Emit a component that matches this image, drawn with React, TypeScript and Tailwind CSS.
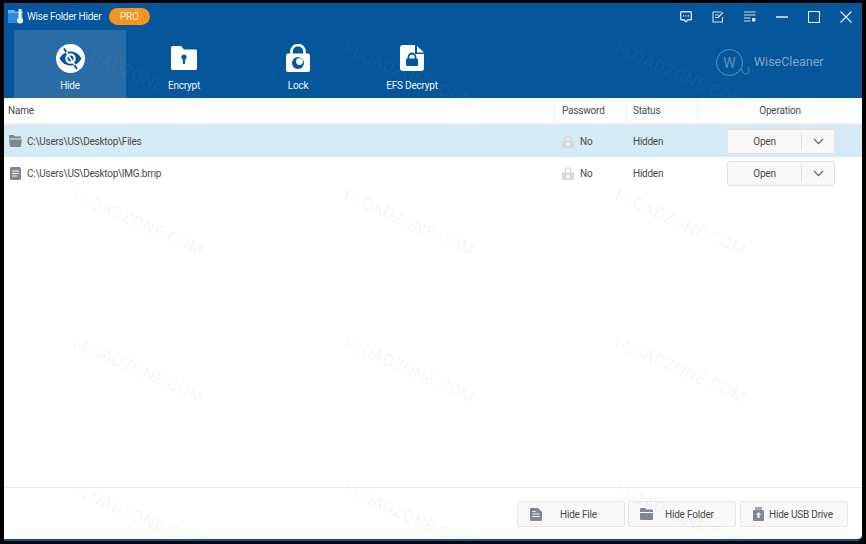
const FONT = 'Roboto, sans-serif';

function HideIcon() {
  return (
    <svg width="29" height="29" viewBox="0 0 29 29">
      <circle cx="14.5" cy="14.5" r="14.5" fill="#fff" />
      <path d="M8 4.500L21 25" stroke="#05569a" strokeWidth="2" />
      <path d="M3.500 14.500C6.500 9.500 10 7.500 14.500 7.500s8 2 11 7c-3 5-6.500 7-11 7s-8-2-11-7z" fill="#05569a" />
      <circle cx="14.500" cy="14.500" r="5.200" fill="#fff" />
      <circle cx="14.500" cy="14.500" r="3" fill="#05569a" />
      <path d="M10.200 8L18.800 21" stroke="#fff" strokeWidth="1.500" />
    </svg>
  );
}

function EncryptIcon() {
  return (
    <svg width="26" height="24" viewBox="0 0 26 24">
      <path d="M1.500 0H10l3 3.500h11.500A1.500 1.500 0 0 1 26 5v17.500a1.500 1.500 0 0 1-1.500 1.500h-23A1.500 1.500 0 0 1 0 22.500v-21A1.500 1.500 0 0 1 1.500 0z" fill="#fff" />
      <circle cx="13" cy="11" r="2.600" fill="#05569a" />
      <rect x="11.900" y="11" width="2.200" height="7" fill="#05569a" />
    </svg>
  );
}

function LockIcon() {
  return (
    <svg width="24" height="28" viewBox="0 0 24 28">
      <path d="M5.500 11V7.500a6.500 6.500 0 0 1 13 0V11" fill="none" stroke="#fff" strokeWidth="2.600" />
      <rect x="0" y="9.500" width="24" height="18.500" rx="2" fill="#fff" />
      <circle cx="12" cy="19" r="6" fill="#05569a" />
      <circle cx="13.500" cy="17.500" r="3.400" fill="#fff" />
    </svg>
  );
}

function EfsIcon() {
  return (
    <svg width="24" height="26" viewBox="0 0 24 26">
      <path d="M3 0H15L15 9H24V23a3 3 0 0 1-3 3H3a3 3 0 0 1-3-3V3a3 3 0 0 1 3-3z" fill="#fff" />
      <path d="M17 1L24 7.500H17z" fill="#fff" />
      <rect x="6" y="13.500" width="12" height="7.500" rx="1" fill="#05569a" />
      <path d="M8.500 14v-2a3.500 3.500 0 0 1 7 0v2" fill="none" stroke="#05569a" strokeWidth="1.800" />
    </svg>
  );
}

function FolderOpenIcon() {
  return (
    <svg width="13" height="12" viewBox="0 0 13 12" fill="#7f8791">
      <path d="M0 1a1 1 0 0 1 1-1h3.500l1.200 1.300h5.300a1 1 0 0 1 1 1V3.500H0z" />
      <path d="M0 4.500h13L11.800 12H1z" />
    </svg>
  );
}

function DocIcon() {
  return (
    <svg width="11" height="13" viewBox="0 0 11 13">
      <rect width="11" height="13" rx="1.500" fill="#7f8791" />
      <path d="M2 4h7M2 6.500h7M2 9h5" stroke="#fff" strokeWidth="1" />
    </svg>
  );
}

function SmallLock() {
  return (
    <svg width="12" height="13" viewBox="0 0 12 13">
      <path d="M3 6V4a3 3 0 0 1 6 0v2" fill="none" stroke="#d9d9d9" strokeWidth="1.500" />
      <rect y="5.500" width="12" height="7.500" rx="0.500" fill="#d9d9d9" />
      <rect x="4.500" y="8" width="3" height="2.500" fill="#fff" />
    </svg>
  );
}

function Chevron() {
  return (
    <svg width="11" height="7" viewBox="0 0 11 7">
      <path d="M1 1l4.500 4.500L10 1" fill="none" stroke="#6b6b6b" strokeWidth="1.300" />
    </svg>
  );
}

function Watermark() {
  return (
    <span className="block w-[140px] origin-top-left rotate-[23.5deg] whitespace-nowrap text-[17px] leading-none tracking-[0.3px] text-[#8fa3b8]/10">
      I-LOADZONE.COM
    </span>
  );
}

const tabs = [
  { label: 'Hide', icon: <HideIcon />, active: true },
  { label: 'Encrypt', icon: <EncryptIcon />, active: false },
  { label: 'Lock', icon: <LockIcon />, active: false },
  { label: 'EFS Decrypt', icon: <EfsIcon />, active: false },
];

const rows = [
  { path: 'C:\\Users\\US\\Desktop\\Files', icon: <FolderOpenIcon />, selected: true },
  { path: 'C:\\Users\\US\\Desktop\\IMG.bmp', icon: <DocIcon />, selected: false },
];

function TitleIcons() {
  return (
    <div className="flex h-[26px] items-center">
      <button className="flex w-8 justify-center">
        <svg width="12" height="12" viewBox="0 0 12 12">
          <path d="M1.500 0.800h9a.8.800 0 0 1 .8.8v6.400a.8.800 0 0 1-.8.800H8L6 10.800 4 8.800H1.500a.8.800 0 0 1-.8-.8V1.600a.8.800 0 0 1 .8-.8z" fill="none" stroke="#cfe0ee" strokeWidth="1.400" />
          <path d="M3 4.800h1.200M5.400 4.800h1.200M7.800 4.800h1.200" stroke="#fff" strokeWidth="1.200" />
        </svg>
      </button>
      <button className="flex w-8 justify-center">
        <svg width="12" height="12" viewBox="0 0 12 12">
          <path d="M9.500 1H1v10h9.500V6" fill="none" stroke="#cfe0ee" strokeWidth="1.100" />
          <path d="M3 4h4M3 6.500h3.500M6 6.500L11 1.500" stroke="#cfe0ee" strokeWidth="1.100" />
        </svg>
      </button>
      <button className="flex w-8 justify-center">
        <svg width="12" height="12" viewBox="0 0 12 12">
          <path d="M0 1h11.500M0 4h11.500M0 7h6.500M0 10h6.500" stroke="#cfe0ee" strokeWidth="1.100" />
          <path d="M8 7h3.500v3.500H8z" fill="#cfe0ee" />
        </svg>
      </button>
      <button className="flex w-8 justify-center">
        <svg width="12" height="12" viewBox="0 0 12 12">
          <path d="M0 6h12" stroke="#e6eff6" strokeWidth="1.400" />
        </svg>
      </button>
      <button className="flex w-8 justify-center">
        <svg width="12" height="12" viewBox="0 0 12 12">
          <rect x="0.500" y="0.500" width="11" height="11" fill="none" stroke="#e6eff6" strokeWidth="1.100" />
        </svg>
      </button>
      <button className="flex w-8 justify-center">
        <svg width="12" height="12" viewBox="0 0 12 12">
          <path d="M0.500 0.500l11 11M11.500 0.500l-11 11" stroke="#e6eff6" strokeWidth="1.100" />
        </svg>
      </button>
    </div>
  );
}

function BottomButton({ label, icon, textClass }: { label: string; icon: React.ReactNode; textClass: string }) {
  return (
    <button className="flex h-[26px] w-[108px] items-center rounded-[2px] border border-[#e6e6e6] bg-[#f8f8f8] text-[10px] tracking-[-0.2px] text-[#4a4a4a] last:ml-px">
      <span className="ml-[11px] flex w-[13px] shrink-0 justify-center">{icon}</span>
      <span className={textClass}>{label}</span>
    </button>
  );
}

export default function App() {
  return (
    <div className="relative h-[544px] w-[866px] overflow-hidden bg-black pt-[3px] pr-[4px] pb-[3px] pl-[4px]" style={{ fontFamily: FONT }}>
      <div className="flex h-full flex-col overflow-hidden rounded-br-[5px] border-b-2 border-[#0b4f96] bg-white">
        {/* header */}
        <div className="h-[95px] shrink-0 bg-[#05569a] text-white">
          <div className="flex h-[27px] items-start justify-between">
            <div className="flex items-center pt-[5px] pl-[4px]">
              <svg width="17" height="15" viewBox="0 0 17 15">
                <path d="M0 1h6l1.500 1.500H15v11.500H1a1 1 0 0 1-1-1z" fill="#6db3e8" />
                <path d="M0 4h15v10H1a1 1 0 0 1-1-1z" fill="#2d8ad6" />
                <rect x="10.500" y="0" width="3" height="10" fill="#f4f4f4" />
                <circle cx="12" cy="11.500" r="3" fill="#f4f4f4" />
              </svg>
              <span className="ml-[2px] w-[74px] whitespace-nowrap text-[10px] tracking-[-0.25px] text-[#e8f0f6]">Wise Folder Hider</span>
              <span className="ml-[8px] flex h-[17px] w-[41px] items-center justify-center rounded-full bg-[#f7931e] text-[10px] text-[#fff3e0]">PRO</span>
            </div>
            <div className="pt-px"><TitleIcons /></div>
          </div>
          <div className="flex items-stretch justify-between pl-[10px]">
            <div className="flex gap-[2px]">
              {tabs.map(t => (
                <div key={t.label} className={`flex h-[68px] w-[112px] flex-col items-center rounded-t-[2px] ${t.active ? 'bg-[#2a6ca6]' : ''}`}>
                  <div className="flex h-[46px] items-center justify-center pt-[10px]">{t.icon}</div>
                  <span className="mt-[3px] text-[10px] leading-[14px] tracking-[-0.2px] text-[#eef4f9]">{t.label}</span>
                </div>
              ))}
            </div>
            <div className="mr-[37px] flex items-start pt-[19px]">
              <svg width="35" height="28" viewBox="0 0 35 28" fill="none" stroke="#5f90bd" strokeWidth="1">
                <circle cx="13.500" cy="13.500" r="13" />
                <path d="M25.500 19.500c.5 5 4 6.500 6 5s2.500-5-.5-6.500" />
                <text x="13.500" y="18.500" textAnchor="middle" fontSize="14" fill="#5f90bd" stroke="none">W</text>
              </svg>
              <span className="mt-[4px] ml-[3px] w-[71px] whitespace-nowrap text-[12.5px] leading-[18px] text-[#7ba6cd]">WiseCleaner</span>
            </div>
          </div>
        </div>

        {/* table header */}
        <div className="flex h-[27px] shrink-0 items-center border-b-2 border-[#eeeeee] text-[10px] tracking-[-0.2px] text-[#4a4a4a]">
          <div className="flex h-full flex-1 items-center pl-[4px]">Name</div>
          <div className="flex h-full w-[72px] items-center border-l border-[#eeeeee] pl-[7px]">Password</div>
          <div className="flex h-full w-[71px] items-center border-l border-[#eeeeee] pl-[6px]">Status</div>
          <div className="flex h-full w-[165px] items-center justify-center border-l border-[#eeeeee]">Operation</div>
        </div>

        {/* rows */}
        <div className="flex-1">
          {rows.map(r => (
            <div key={r.path} className={`flex h-[32px] items-center text-[10px] tracking-[-0.25px] text-[#4a4a4a] ${r.selected ? 'bg-[#d4ebf5]' : ''}`}>
              <div className="flex flex-1 items-center pl-[5px]">
                <span className="flex w-[13px] justify-center">{r.icon}</span>
                <span className="ml-[5px]">{r.path}</span>
              </div>
              <div className="flex w-[72px] items-center pl-[8px]">
                <SmallLock />
                <span className="ml-[6px]">No</span>
              </div>
              <div className="w-[71px] pl-[7px]">Hidden</div>
              <div className="w-[165px] pl-[30px]">
                <div className="flex h-[25px] w-[108px] items-center rounded-[2px] border border-[#e4e4e4] bg-[#f8f8f8]">
                  <span className="w-[73px] text-center">Open</span>
                  <span className="h-[17px] w-px bg-[#dddddd]" />
                  <span className="flex flex-1 justify-center"><Chevron /></span>
                </div>
              </div>
            </div>
          ))}
        </div>

        {/* footer */}
        <div className="flex h-[52px] shrink-0 items-start justify-end gap-[3px] border-t border-[#e8e8e8] pt-[13px] pr-[14px]">
          <BottomButton
            label="Hide File"
            textClass="ml-[18px]"
            icon={
              <svg width="12" height="13" viewBox="0 0 12 13">
                <path d="M1 0h7l4 4v8a1 1 0 0 1-1 1H1a1 1 0 0 1-1-1V1a1 1 0 0 1 1-1z" fill="#7f8791" />
                <path d="M2.500 6h7M2.500 8.500h7M2.500 3.500h3" stroke="#f8f8f8" strokeWidth="1" />
              </svg>
            }
          />
          <BottomButton
            label="Hide Folder"
            textClass="ml-[12px]"
            icon={
              <svg width="13" height="12" viewBox="0 0 13 12">
                <path d="M1 0h4l1.300 1.500H12a1 1 0 0 1 1 1V11a1 1 0 0 1-1 1H1a1 1 0 0 1-1-1V1a1 1 0 0 1 1-1z" fill="#7f8791" />
                <path d="M0 4.500h13" stroke="#f8f8f8" strokeWidth="1" />
              </svg>
            }
          />
          <BottomButton
            label="Hide USB Drive"
            textClass="ml-[4px]"
            icon={
              <svg width="11" height="14" viewBox="0 0 11 14">
                <path d="M2 0h7v3H2z" fill="#a3a9b0" />
                <rect y="3" width="11" height="11" rx="1" fill="#7f8791" />
                <path d="M5.500 5L8 8H3zM4.500 8h2v3h-2z" fill="#f8f8f8" />
              </svg>
            }
          />
        </div>
      </div>

      {/* watermark repeated over the whole window */}
      <div className="pointer-events-none absolute top-[40px] left-[77px] grid grid-cols-[271px_271px_271px] grid-rows-[147px_147px_147px_147px]">
        {Array.from({ length: 12 }, (_, i) => <Watermark key={i} />)}
      </div>
    </div>
  );
}
